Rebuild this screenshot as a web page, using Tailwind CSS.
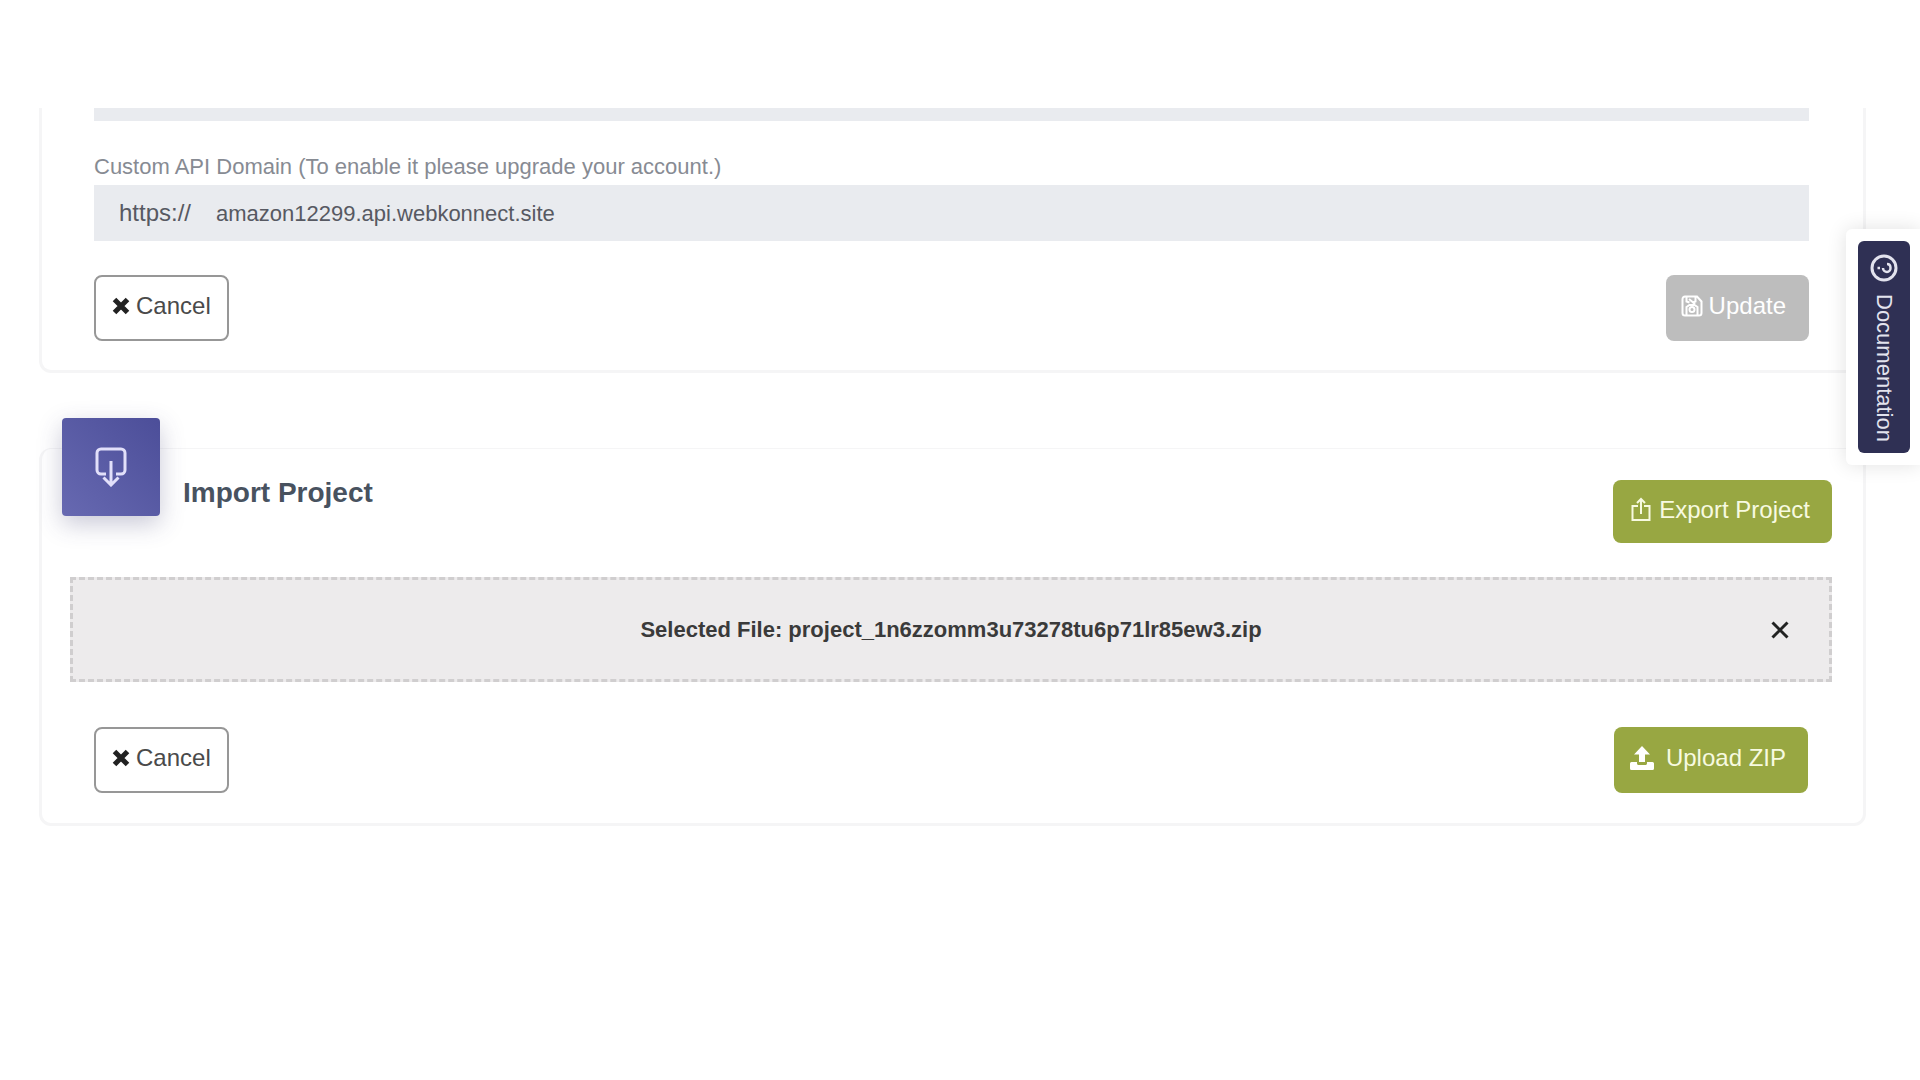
<!DOCTYPE html>
<html lang="en">
<head>
    <meta charset="UTF-8">
    <meta name="viewport" content="width=device-width, initial-scale=1.0">
    <title>Project Settings</title>
    <script src="https://cdn.jsdelivr.net/npm/@tailwindcss/browser@4"></script>
</head>
<body class="bg-white font-['Liberation_Sans',Arial,sans-serif] text-[#3f4047]">

    <main class="pt-[108px] pl-[39px] pr-[54px]">
        <!-- Domain settings -->
        <form class="rounded-b-xl border-x-3 border-b-3 border-[#f5f5f6] pl-13 pr-[54px] pb-[29px]">
            <div class="h-[13px] bg-[#e9ebef]"></div>
            <label for="api-domain" class="mt-[33px] mb-[5px] block text-[22px] leading-[26px] text-[#878b93]">Custom API Domain (To enable it please upgrade your account.)</label>
            <div class="flex h-14 items-center bg-[#e9ebef] text-[#575962]">
                <span class="w-[122px] pl-[25px] text-2xl">https://</span>
                <input id="api-domain" type="text" value="amazon12299.api.webkonnect.site" readonly class="min-w-0 flex-1 bg-transparent text-[22px] outline-none">
            </div>
            <div class="mt-[34px] flex items-center justify-between">
                <button type="button" class="flex h-[66px] items-center gap-[6px] rounded-lg border-2 border-[#979797] bg-white px-4 pb-1 text-2xl text-[#4a4a4a]">
                    <svg class="size-[18px]" viewBox="0 0 18 18" fill="none" stroke="#222" stroke-width="5"><path d="M2.5 2.5l13 13M15.5 2.5l-13 13"/></svg>
                    Cancel
                </button>
                <button type="button" disabled class="flex h-[66px] items-center gap-[6px] rounded-lg bg-[#bdbdbd] pl-[15px] pr-[23px] pb-1 text-2xl text-white">
                    <svg class="size-[22px]" viewBox="0 0 22 22" fill="none" stroke="currentColor" stroke-width="2"><path d="M4 1.500h12l4.500 5V18a2.500 2.500 0 0 1-2.500 2.500H4A2.500 2.500 0 0 1 1.500 18V4A2.500 2.500 0 0 1 4 1.500zM5.500 1.500v5l3 1M14.500 1.500v5l-3 1M5.500 20v-8l3-2h5l3 2v8"/><circle cx="11" cy="14.500" r="2.500"/><path d="M8 4l6 5"/></svg>
                    Update
                </button>
            </div>
        </form>

        <!-- Import / export -->
        <section class="mt-[75px] rounded-xl border-x-3 border-t-1 border-b-3 border-[#f5f5f6] pl-7 pr-[31px] pb-[30px]">
            <div class="flex h-32 items-start">
                <div class="-mt-[31px] -ml-2 flex size-[98px] items-center justify-center rounded-sm bg-linear-to-tr from-[#6769b1] to-[#4c4e99] shadow-[0_8px_24px_rgba(60,60,110,0.28)]">
                    <svg class="h-[40px] w-[32px]" viewBox="0 0 32 40" fill="none" stroke="#e2e0fa" stroke-width="3"><path d="M11 27H6a4 4 0 0 1-4-4V6a4 4 0 0 1 4-4h20a4 4 0 0 1 4 4v17a4 4 0 0 1-4 4h-5"/><path d="M16 14v24M8.500 30.500L16 38l7.500-7.500"/></svg>
                </div>
                <h2 class="mt-7 ml-[23px] text-[28px] leading-8 font-bold text-[#48525f]">Import Project</h2>
                <button type="button" class="mt-[31px] ml-auto flex h-[63px] items-center gap-2 rounded-lg bg-[#98a742] pl-[18px] pr-[22px] pb-1 text-2xl text-[#f7fae0]">
                    <svg class="h-[25px] w-[20px]" viewBox="0 0 20 25" fill="none" stroke="currentColor" stroke-width="2"><path d="M7 9H1.500v14h17V9H13"/><path d="M10 17V2M6 6l4-4 4 4"/></svg>
                    Export Project
                </button>
            </div>

            <div class="relative flex h-[105px] items-center justify-center border-3 border-dashed border-[#d0cecf] bg-[#edebec] text-[22px] font-bold text-[#3a3a3a]">
                Selected File: project_1n6zzomm3u73278tu6p71lr85ew3.zip
                <button type="button" aria-label="Remove file" class="absolute right-10">
                    <svg class="size-[18px]" viewBox="0 0 18 18" fill="none" stroke="#222" stroke-width="3"><path d="M1.500 1.500l15 15M16.500 1.500l-15 15"/></svg>
                </button>
            </div>

            <div class="mt-[45px] flex items-center justify-between px-6">
                <button type="button" class="flex h-[66px] items-center gap-[6px] rounded-lg border-2 border-[#979797] bg-white px-4 pb-1 text-2xl text-[#4a4a4a]">
                    <svg class="size-[18px]" viewBox="0 0 18 18" fill="none" stroke="#222" stroke-width="5"><path d="M2.500 2.500l13 13M15.500 2.500l-13 13"/></svg>
                    Cancel
                </button>
                <button type="button" class="flex h-[66px] items-center gap-3 rounded-lg bg-[#98a742] pl-4 pr-[22px] pb-1 text-2xl text-[#f7fae0]">
                    <svg class="size-6" viewBox="0 0 24 24" fill="#fff"><path d="M12 0l8 8.500h-5V16H9V8.500H4z"/><path d="M1.500 16H7v1.500c0 .8.700 1.500 1.500 1.500h7c.8 0 1.500-.7 1.500-1.500V16h5.500a1.500 1.500 0 0 1 1.500 1.500v5a1.500 1.500 0 0 1-1.500 1.500h-21A1.500 1.500 0 0 1 0 22.500v-5A1.500 1.500 0 0 1 1.500 16z"/></svg>
                    Upload ZIP
                </button>
            </div>
        </section>
    </main>

    <!-- Docs tab pinned to the right edge -->
    <div class="fixed top-[229px] right-0 rounded-l-md bg-white py-3 pl-3 pr-[10px] shadow-[0_0_20px_rgba(0,0,0,0.12)]">
        <a href="#" class="flex h-[212px] w-[52px] flex-col items-center rounded-md bg-[#2f3054] pt-[13px] text-[22px] text-[#e3e3ee]">
            <svg class="size-7" viewBox="0 0 28 28" fill="none" stroke="currentColor" stroke-width="3"><circle cx="14" cy="14" r="12"/><path stroke-width="2.500" d="M17 10c3 0 3.500 2 3.500 4s-1.500 4-3.500 4-4-1.500-4-4M10 14H7.500"/></svg>
            <span class="mt-3 leading-7 [writing-mode:vertical-rl]">Documentation</span>
        </a>
    </div>

</body>
</html>
